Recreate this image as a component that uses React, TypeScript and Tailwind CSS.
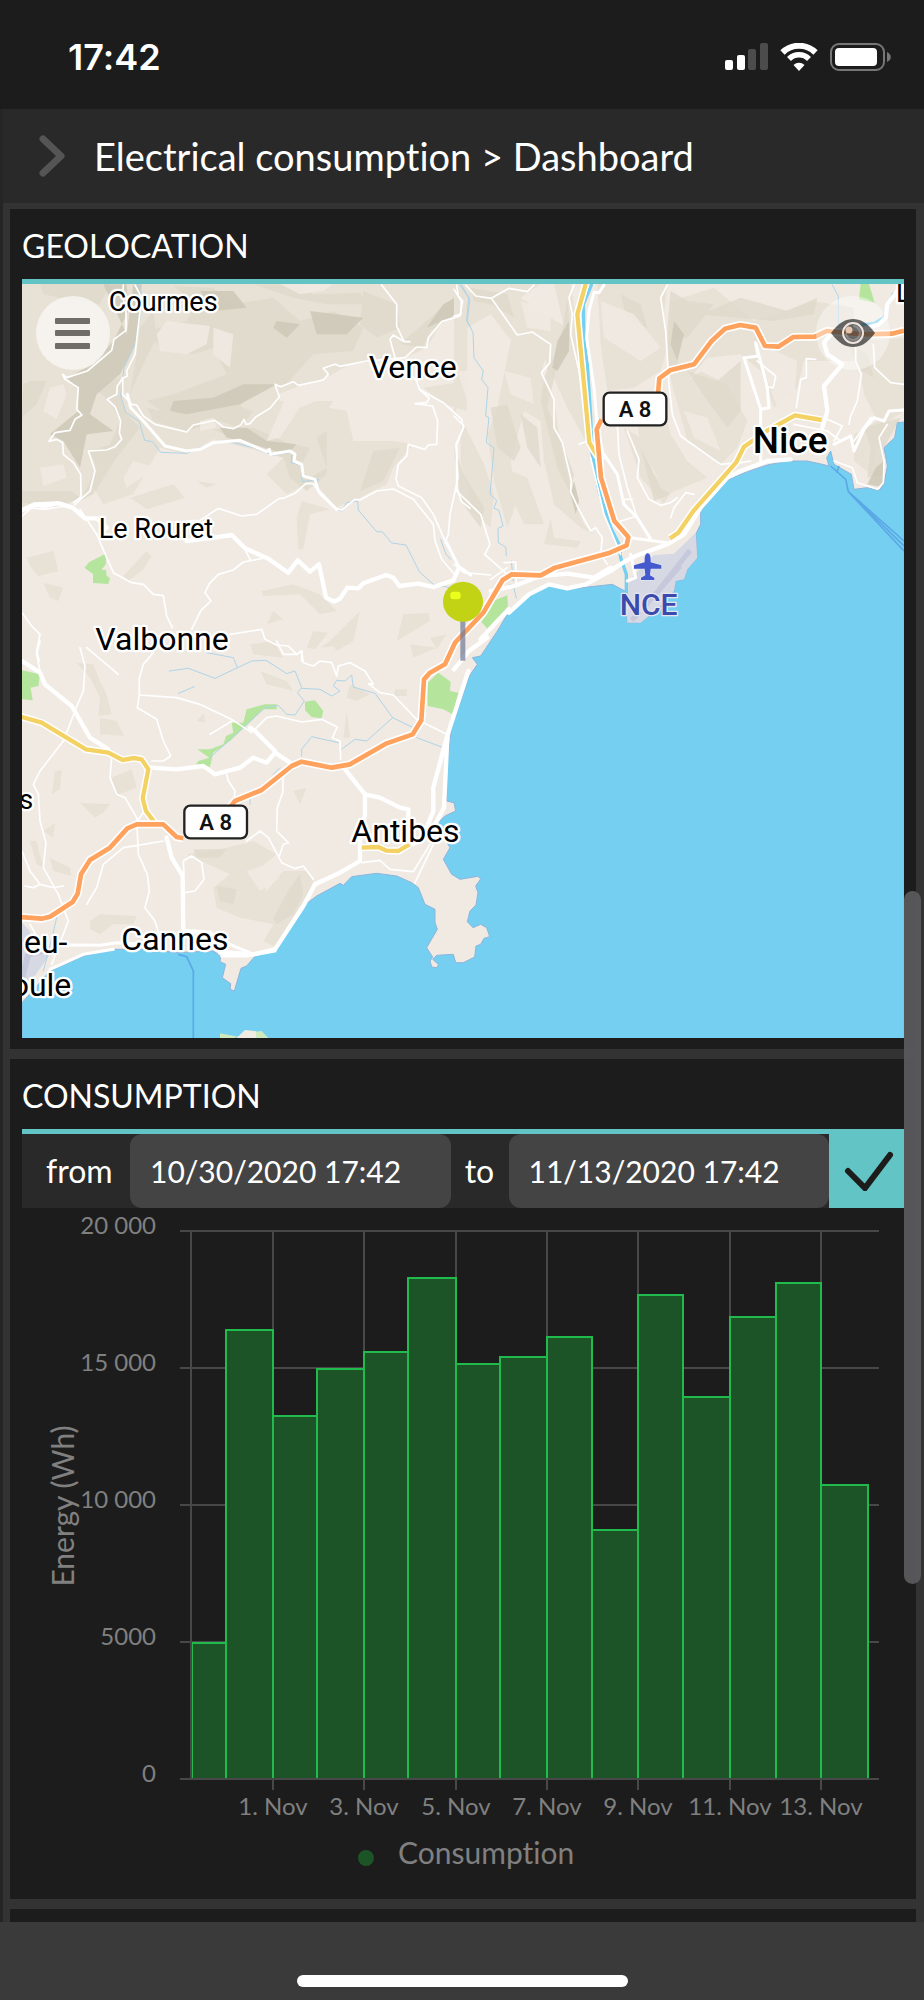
import { useState } from "react";
import type { ReactNode } from "react";

// ---------------------------------------------------------------------------
// Map data. The map is split in quadrants, paths are relative to their quadrant
// ---------------------------------------------------------------------------

interface Quadrant {
  x: number;
  y: number;
  pale?: string;
  light?: string;
  mid?: string;
  dark?: string;
  parks?: string;
  streams?: string;
  rivers?: string;
  minorRoads?: string;
  roads?: string;
  majorRoads?: string;
}

const SEA =
  "M2712 483 L2692 485 2684 530 2652 560 2662 615 2652 670 2637 688 2602 680 2562 685 2554 640 2502 610 2492 570 2480 590 2487 615 2467 610 2422 600 2362 600 2302 612 2242 632 2187 655 2142 700 2102 750 2102 790 2087 820 2092 890 2062 925 2052 955 2027 960 2022 990 1977 1040 1922 1085 1882 1085 1875 990 1837 970 1702 985 1647 975 1592 1000 1522 1060 1492 1110 1442 1185 1417 1190 1432 1210 1408 1245 1355 1400 1340 1520 1340 1620 1362 1625 1367 1650 1335 1665 1308 1690 1350 1760 1330 1795 1355 1840 1380 1855 1434 1846 1442 1854 1427 1875 1434 1895 1428 1932 1410 1950 1402 1982 1419 2000 1442 1990 1460 2000 1469 2027 1452 2032 1442 2050 1428 2055 1424 2088 1390 2105 1367 2105 1360 2080 1310 2083 1298 2095 1315 2110 1312 2120 1295 2118 1290 2100 1298 2088 1280 2060 1312 2005 1305 1985 1305 1945 1275 1930 1255 1880 1235 1865 1190 1845 1130 1837 1055 1847 1030 1873 1020 1867 950 1905 910 1935 825 2070 770 2080 740 2115 723 2122 703 2190 690 2185 692 2168 667 2150 677 2110 660 2102 662 2085 640 2070 525 2075 460 2065 340 2065 250 2085 150 2130 66 2225 66 2340 2712 2340Z";

const QUADRANTS: Quadrant[] = [
  {
    x: 0,
    y: 0,
    light:
      "M66 69 L1400 69 1385 160 1325 185 1280 260 1215 290 1050 310 980 350 900 375 835 400 840 420 1000 420 960 480 1010 560 985 610 1080 690 1010 740 940 660 860 700 800 640 850 590 640 535 560 580 480 560 400 700 310 730 280 680 220 720 66 745Z M930 430 L1040 450 1060 540 1180 540 1240 550 1180 620 1160 670 1060 720 1000 740 950 640 970 520Z M905 720 L990 745 930 760 910 865 895 865 890 770Z M80 890 L160 870 175 930 115 945 90 915Z M370 945 L440 870 455 885 430 925 385 960Z M390 710 L520 670 555 710 440 745Z M785 990 L880 970 960 1000 1010 1050 960 1060 900 1000 790 1005Z M1080 1050 L1060 1140 1010 1170 990 1140Z M1210 1060 L1285 1055 1290 1080 1190 1140Z M940 1110 L985 1115 945 1165 920 1160Z M130 965 L190 980 175 1020 150 1010Z M590 660 L650 670 620 680Z M1270 380 L1400 360 1400 450 1330 430Z M820 1050 L800 1090 850 1075Z M1290 1130 L1340 1120 1310 1165Z",
    mid:
      "M120 69 L330 69 300 130 180 110 130 100Z M520 75 L640 80 700 130 820 110 900 180 1000 150 1090 200 1060 270 940 280 860 370 780 380 700 450 560 500 440 420 520 400 680 340 640 260 580 280 490 270 440 210 560 180 590 130Z M760 70 L900 70 940 100 1080 95 1100 130 980 130 880 110Z M1090 90 L1190 130 1200 200 1130 230 1080 190Z M1200 250 L1290 170 1370 100 1385 150 1290 210 1270 260Z M440 440 L540 460 700 430 760 450 720 500 660 480 560 510 460 480Z M640 505 L760 500 860 545 930 560 900 620 930 650 980 620 950 530 980 510 980 640 920 690 870 650 850 590 760 560Z M280 380 L360 350 365 420 380 460 420 500 350 590 280 700 240 720 290 620 270 570 330 550 360 480 330 420Z M66 690 L215 690 240 710 180 740 66 725Z M1120 570 L1200 560 1150 660 1080 690Z M420 200 L460 150 470 230 430 310 390 400 410 280Z M90 360 L70 370 66 470 110 430 140 360Z",
    dark:
      "M310 70 L380 70 385 150 340 240 280 310 200 350 235 380 235 450 150 520 190 540 240 620 260 520 340 510 270 460 290 400 360 340 410 240 420 150 425 70 400 70 380 220Z M520 420 L640 410 730 370 830 370 720 430 560 460 510 450Z M600 90 L700 90 740 140 640 150Z M930 150 L1090 170 1040 220 950 220Z M660 500 L740 500 800 540 890 550 860 580 760 550 680 530Z M830 180 L900 190 860 230 820 200Z M1330 130 L1385 100 1370 160 1280 200Z",
    pale:
      "M150 380 L190 370 200 400 170 475 130 450Z M500 180 L630 195 620 250 560 280 480 270 470 220Z M860 390 L960 370 1000 400 900 440 840 530 800 540 840 450Z M840 69 L1000 69 970 90 900 100Z M400 600 L470 620 380 680 370 650Z M1100 430 L1180 420 1160 500 1090 500Z M600 480 L640 470 650 500 600 510Z M640 200 L700 220 690 320 640 280Z M120 620 L190 610 200 650 130 675Z",
    parks: "M317 878 L268 903 253 920 279 939 279 966 325 969 330 952 320 944 318 927 305 926 318 908Z",
    streams:
      "M415 72 L424 100 420 170 410 240 372 320 362 405 378 455 418 482 434 538 458 542 482 574 560 577 630 548 680 540 760 560 820 583 878 572 873 605 903 612 907 662 955 655 948 685 1010 745 1025 750 1040 725 1073 720 1075 747 1130 812 1148 813 1175 846 1218 852 1258 932 1300 970 1350 980 M1380 72 L1406 110 1400 180 1412 200 M1322 835 L1338 880 1352 895",
    minorRoads:
      "M370 72 L368 110 378 140 378 208 342 235 335 268 262 330 200 350 188 340 195 355 235 380 230 445 246 462 225 475 210 508 165 515 147 541 170 535 188 545 190 580 220 605 242 640 243 708 220 725 M405 72 L425 110 405 280 380 330 382 345 368 352 352 375 350 400 322 415 345 437 362 480 358 515 365 535 345 557 320 567 265 570 285 630 270 690 225 730 M368 350 L368 400 395 430 410 432 430 465 465 490 560 513 580 492 645 478 670 498 700 503 722 492 732 475 738 490 750 488 768 467 810 442 838 408 825 370 842 377 880 362 895 373 970 357 985 340 970 322 1005 310 1020 316 1100 300 1215 290 1250 258 1280 260 1285 230 1325 182 1380 165 1388 120 1375 105 1370 72 M1145 72 L1190 130 1190 195 1212 242 1230 242 M1212 242 L1180 222 1170 235 1185 290 1250 360 1258 385 1330 425 1385 475 1390 500 1368 550 1374 650 1350 760 1345 820 1335 845 M1258 385 L1288 412 1280 425 1245 428 1298 435 1313 480 1310 550 1285 552 1275 565 1225 550 1220 585 1195 610 1188 655 1195 675 1265 710 1300 760 1340 850 1380 920 M560 780 L600 778 655 742 725 765 770 760 838 712 850 712 885 697 918 667 940 668 960 700 1005 742 1025 747 1065 715 1080 717 1130 690 1180 684 1240 715 1300 790 1305 840 1325 895 1365 942 M750 895 L735 865 M1370 680 L1385 722 1410 742 M240 745 L290 820 320 890 340 935 395 965 430 970 460 1000 490 1004 500 1065 517 1100 M66 765 L95 740 130 745 200 735 M800 890 L730 903 700 927 655 940 628 968 615 995 633 1020 603 1048 575 1105 M66 1055 L95 1095 120 1120 110 1170 118 1200 M690 1120 L785 1105 795 1135 830 1152 865 1155 890 1180 905 1170 905 1200",
    roads:
      "M382 400 L392 440 430 480 495 555 560 570 600 565 640 545 720 538 800 572 808 565 812 580 870 570 885 580 882 600 905 610 910 645 945 655 955 690 1010 745 M66 745 L105 728 175 725 215 738 260 775 M1340 845 L1375 915 1412 942",
    majorRoads:
      "M66 748 L105 730 130 735 175 727 218 740 255 772 290 772 320 800 M560 840 L640 830 695 822 735 862 805 893 865 935 893 898 930 932 957 910 978 1010 1003 1022 1020 1013 1042 980 1075 982 1090 967 1158 942 1180 950 1198 975 1255 968 1300 978 1360 958 1375 925",
  },
  {
    x: 1362,
    y: 0,
    light:
      "M0 69 L260 69 200 110 290 170 340 200 330 280 280 330 270 270 180 250 110 160 40 200 40 330 20 420 0 460Z M170 240 L240 215 285 255 260 340 300 410 320 560 350 690 390 790 420 820 380 800 300 730 270 600 260 480 210 450 170 600 190 720 160 800 120 660 100 520 130 440Z M300 69 L350 69 370 200 400 400 400 550 340 440 290 330 340 240Z M430 69 L640 69 630 160 640 260 620 330 540 380 460 390 440 250Z M650 120 L780 80 900 180 1080 120 1200 140 1200 300 1050 300 1030 380 960 440 920 330 860 280 760 290 700 360 660 400 640 300Z M660 390 L740 330 820 370 880 480 850 560 800 610 700 540Z M510 500 L560 530 600 640 650 690 630 730 560 650Z M1200 240 L1350 230 1350 450 1290 490 1250 640 1200 600 1200 520 1270 480 1230 400Z M290 770 L270 850 370 860 380 840 300 830Z M20 470 L90 610 120 700 110 800 60 760 20 600Z M150 620 L220 650 270 790 210 790 150 660Z M540 400 L620 400 650 520 700 600 760 650 640 700 560 560Z",
    mid:
      "M340 110 L350 240 310 310 280 440 330 560 360 640 350 700 310 620 260 420 270 350 320 240Z M650 90 L700 120 780 130 700 230 650 240 680 330 640 340 640 200Z M500 100 L560 130 580 200 520 180Z M740 160 L860 110 1000 150 1090 110 1080 160 960 180 840 170Z M50 80 L160 100 180 170 110 130 60 120Z M700 330 L790 360 860 300 860 450 820 500 760 420Z M110 440 L160 430 200 560 180 600 130 560Z M1230 500 L1340 470 1290 560 1290 640 1240 650 1250 560Z M200 460 L250 500 260 620 220 560Z M560 560 L620 680 650 700 600 720Z M0 560 L30 640 90 740 80 800 20 720Z M1180 240 L1240 280 1260 350 1210 320Z",
    dark:
      "M310 240 L345 180 345 270 310 330 295 320Z M660 180 L690 220 670 300 650 250Z M1265 620 L1290 600 1290 680 1240 670Z M360 660 L375 720 365 760 350 700Z",
    pale:
      "M440 120 L540 160 620 260 560 300 450 230Z M900 240 L1030 300 1020 420 970 440 930 330Z M10 330 L70 330 90 450 40 420Z M690 450 L760 470 800 570 720 530Z M200 120 L290 150 290 210 220 200Z M150 330 L230 350 240 430 170 400Z M1080 330 L1200 320 1180 440 1110 440Z",
    parks: "M1220 69 L1245 69 1262 125 1215 115Z M160 1003 L162 1035 105 1108 82 1083 122 1018Z",
    streams:
      "M22 72 L48 115 40 180 57 215 60 290 88 330 83 355 102 380 95 465 105 470 97 545 120 560 108 700 128 718 120 742 135 748 147 795 132 802 133 845 155 858 157 885 M1135 72 L1153 105 1153 200 M165 970 L178 975 187 1012 M172 900 L178 960",
    rivers:
      "M412 72 L388 130 390 240 400 310 410 470 415 580 435 690 470 800 495 850 500 890 517 940 517 1000 M1300 140 L1290 170 1260 188 1220 192 M1318 100 L1306 125",
    minorRoads:
      "M35 72 L65 105 112 112 190 222 235 213 290 250 287 305 262 335 300 415 300 500 325 545 352 660 350 692 372 740 410 810 425 800 M112 112 L165 82 220 92 240 72 M0 85 L22 120 20 160 0 165 M360 72 L345 110 355 160 350 220 375 330 400 540 375 550 M0 465 L30 495 8 550 8 690 80 760 108 850 92 880 160 940 M640 72 L620 110 635 210 640 290 645 370 655 460 680 525 800 610 860 605 890 600 M520 510 L555 595 550 650 585 715 620 733 650 725 670 710 M650 770 L660 740 695 695 720 700 M490 490 L495 580 520 680 550 770 590 830 M1085 295 L1057 293 1057 350 1040 355 1027 440 M1205 260 L1205 300 1222 340 1210 420 1190 465 1185 490 M1258 250 L1262 320 1310 365 1350 370 M910 300 L965 345 958 380 935 378 M1110 470 L1165 495 1140 540 M1350 445 L1305 450 1290 480 1250 470 1200 540 M1300 490 L1275 530 1290 600 1288 665 1270 685 1210 665 1195 620 1140 600 M150 905 L185 903 187 970 M0 910 L30 935 110 942 M425 800 L445 830 440 880 460 910 M410 590 L450 760 500 880 M510 715 L535 715 M500 780 L550 765 M160 920 L110 955 M1020 490 L1120 510 1160 540",
    roads:
      "M450 72 L435 95 420 94 405 150 398 230 420 380 430 500 M875 290 L912 285 905 245 940 380 945 440 920 445 870 290 M920 440 L920 600 M450 580 L490 640 510 730 550 770 590 835 M530 830 L640 845 M530 880 L545 950 520 960 M430 500 L450 590 M1140 550 L1190 525 1200 570 1230 505 1260 470 1290 480 1305 450 1350 447",
    majorRoads:
      "M1350 75 L1330 90 1300 130 1295 170 1275 190 1225 205 1130 220 1110 245 1120 280 1165 310 1110 375 1120 450 1105 500 M470 930 L515 900 545 885 640 850 690 820 740 740 820 650 860 630 940 600 1010 595 M165 1055 L225 1000 285 970 340 982 395 970 460 935 515 900 M110 990 L180 975 260 945 340 938 420 950 470 920 M80 1135 L135 1075 165 1045 M0 1225 L45 1170 100 1130",
  },
  {
    x: 0,
    y: 1140,
    light:
      "M230 65 L280 70 300 120 320 160 335 220 295 225 300 170 270 110Z M165 390 L185 388 180 445 155 460Z M335 410 L395 385 410 440 345 465Z M240 485 L330 490 310 515 285 530Z M300 230 L350 240 372 285 300 280Z M270 840 L300 820 410 825 400 850 340 850 300 880 270 865Z M560 640 L680 620 760 600 830 640 780 680 800 750 850 690 920 690 940 720 880 870 830 920 790 900 820 850 720 830 650 800 640 740 690 700Z M750 10 L820 0 850 50 760 40Z M1050 130 L1110 160 1070 180 1040 170Z M590 240 L612 215 615 245Z M880 450 L920 440 900 490Z M1185 145 L1220 145 1220 165 1180 165Z M1040 210 L1050 290 1030 290Z M1230 10 L1310 20 1240 50Z M780 90 L860 120 880 150 800 130Z M150 650 L210 680 215 705 160 690Z M130 570 L165 545 160 590Z M90 600 L110 600 130 680 110 670Z M960 20 L990 0 1060 10Z",
    mid: "M870 740 L900 700 910 760 880 820 830 850 820 830Z M650 735 L710 745 700 790 660 780Z M580 625 L680 625 660 650 590 650Z",
    pale: "M690 570 L750 570 740 610 700 600Z M850 390 L910 410 880 430Z M950 60 L1010 80 980 110Z M740 690 L800 670 840 710 780 750Z",
    parks:
      "M66 88 L120 100 115 135 92 140 98 178 66 175Z M915 182 L945 178 970 210 965 232 935 228 915 208Z M1315 95 L1352 122 1350 150 1375 155 1358 220 1330 205 1283 195 1283 125Z M795 190 L830 190 830 205 790 205 690 300 640 335 630 378 588 370 595 360 628 350 592 325 630 325 670 310 678 285 700 275 695 245 730 245 740 205Z",
    streams:
      "M508 90 L565 82 645 112 755 60 798 58 860 98 885 90 905 140 892 155 913 180 885 222 860 220 835 193 795 200 730 260 630 350 M905 142 L960 145 995 165 1020 150 1000 135 1010 118 1035 120 1055 102 1060 138 1125 157 1178 230 1250 265 M1178 230 L1100 300 1065 295 1025 325 M1250 290 L1330 320 M905 345 L905 325 935 287 1015 305 M535 157 L583 137 M620 35 L700 50 712 80 M170 830 L155 895 130 990 M820 400 L840 380 M750 490 L750 470",
    minorRoads:
      "M120 0 L110 40 120 90 M240 20 L255 75 250 150 235 185 190 300 120 390 100 430 115 460 120 540 138 605 130 680 175 760 205 840 155 970 M260 20 L355 100 M460 35 L430 70 418 110 418 160 412 200 470 235 490 300 512 345 490 360 455 360 M420 162 L530 170 600 190 700 238 755 275 M630 280 L700 238 M765 265 L800 230 830 225 905 243 965 235 1012 258 997 290 1020 300 1022 355 M680 400 L685 420 705 450 700 490 M850 410 L848 455 832 500 830 570 865 605 850 610 838 645 M740 600 L780 570 805 590 845 665 885 683 910 675 940 715 M335 350 L330 410 350 460 375 470 410 530 415 640 442 700 448 750 435 800 465 840 480 890 M490 600 L430 610 370 620 310 670 290 740 260 790 M552 700 L550 660 575 645 605 665 612 715 585 750 555 755 M75 735 L100 740 120 730 160 740 190 735 M66 630 L90 690 120 730 M830 0 L850 40 890 40 905 30 910 65 940 75 960 60 995 65 1010 105 1015 75 1050 65 1095 90 1120 130 1105 128 1140 155 1180 162 1250 235 M90 850 L110 885 M1085 665 L1140 658 1170 685 1240 692 1290 610 M1245 725 L1300 610 M440 500 L412 540 M1250 235 L1340 280",
    roads:
      "M200 912 L300 913 350 905 430 910 M580 870 L640 880 700 915 750 935 M150 985 L250 940 340 925 M665 945 L740 945 825 930",
    majorRoads:
      "M66 60 L120 95 135 130 215 195 270 290 325 325 M450 380 L530 385 610 375 645 400 720 380 760 350 800 365 825 335 870 365 M825 330 L765 270 750 260 M1035 385 L1095 460 1140 470 1200 500 1225 505 1225 560 M1095 460 L1095 520 1080 600 1080 660 1020 695 945 730 910 795 825 925 760 940 690 935 660 935 M500 590 L515 650 548 705 550 870 630 875 M1405 90 L1340 290 1300 440 1300 510 1280 560 M1342 290 L1332 500 1290 580 1240 610",
  },
];

const HIGHWAYS =
  "M2712 209 L2675 218 2590 220 2480 210 2445 227 2380 228 2335 257 2295 255 2267 200 2220 192 2175 203 2135 240 2082 310 2010 328 1978 352 1973 410 M1805 475 L1790 505 1803 650 1843 780 1885 828 1880 853 1830 875 1665 920 1622 943 1535 940 1508 957 1450 1055 1365 1145 1335 1210 1290 1235 1272 1255 1264 1378 1238 1420 1160 1447 1050 1510 995 1520 905 1502 875 1515 785 1587 705 1620 685 1645 M550 1732 L530 1728 490 1690 410 1690 382 1702 330 1760 270 1797 243 1840 233 1898 218 1923 150 1967 125 1973 60 1968";

const YELLOW_ROADS =
  "M1757 69 L1732 160 1752 370 1768 545 1792 585 1808 592 M2010 832 L2035 815 2080 750 2208 605 2232 557 2300 510 2385 463 2465 477 M60 1366 L125 1385 258 1465 325 1475 368 1497 402 1491 425 1495 445 1525 428 1612 438 1650 468 1690 M1085 1760 L1135 1758 1160 1769 1195 1770 1228 1750";

const PLACES = [
  { name: "Courmes", x: 326, y: 149, size: 81, weight: 400 },
  { name: "Vence", x: 1106, y: 352, size: 96, weight: 400 },
  { name: "Le Rouret", x: 296, y: 830, size: 81, weight: 400 },
  { name: "Valbonne", x: 286, y: 1166, size: 96, weight: 400 },
  { name: "Nice", x: 2258, y: 576, size: 111, weight: 500 },
  { name: "Antibes", x: 1054, y: 1744, size: 96, weight: 400 },
  { name: "Cannes", x: 364, y: 2066, size: 96, weight: 400 },
  { name: "s", x: 58, y: 1645, size: 81, weight: 400 },
  { name: "eu-", x: 72, y: 2076, size: 96, weight: 400 },
  { name: "oule", x: 32, y: 2206, size: 96, weight: 400 },
  { name: "L", x: 2688, y: 124, size: 81, weight: 400 },
];

function RoadShield({ x, y }: { x: number; y: number }) {
  return (
    <g>
      <rect x={x} y={y} width="188" height="98" rx="18" fill="#fff" stroke="#222" strokeWidth="7" />
      <text x={x + 94} y={y + 72} textAnchor="middle" fontSize="66" fontWeight="600" fill="#111">
        A 8
      </text>
    </g>
  );
}

function RegionMap() {
  return (
    <svg viewBox="66 69 2646 2262" className="block h-auto w-full font-[Roboto,sans-serif]" role="img" aria-label="Map">
      <rect x="66" y="69" width="2646" height="2262" fill="#f0eae3" />
      {QUADRANTS.map((q) => (
        <g key={`${q.x}-${q.y}`} transform={`translate(${q.x} ${q.y})`}>
          <path d={q.light} fill="#e8e2d6" />
          <path d={q.mid} fill="#dfdacb" fillOpacity="0.8" />
          <path d={q.dark} fill="#cdc8b6" fillOpacity="0.85" />
          <path d={q.pale} fill="#f0eae3" fillOpacity="0.85" />
        </g>
      ))}
      <path d={SEA} fill="#75cff1" stroke="#8fb4dc" strokeWidth="3" />
      {/* Ferry lines */}
      <g fill="none" stroke="#5ba8e6" strokeWidth="5">
        <path d="M2492 615 L2537 655 2545 692 2712 840 M2545 692 L2712 855 M2545 692 L2712 870 M2517 615 L2510 635" />
        <path d="M535 2080 L560 2087 580 2130 580 2331" />
      </g>
      {/* Island */}
      <path d="M660 2331 L660 2317 715 2327 700 2331Z M765 2312 L785 2310 805 2331 765 2331Z" fill="#d0e8bd" />
      <path d="M710 2331 L735 2307 768 2311 768 2331Z" fill="#f0eae3" />
      {/* Airports */}
      <path
        d="M2087 815 L2092 890 2062 925 2052 955 2027 960 2022 990 1977 1040 1922 1085 1882 1085 1885 960 1962 882 2022 878Z"
        fill="#d6d8e4"
      />
      <path d="M1962 1005 L2070 868 M1935 1035 L2040 915 M1895 1078 L1920 1052" stroke="#c6c8dc" strokeWidth="15" />
      <path d="M66 1985 L90 2010 95 2080 150 2080 100 2150 66 2175Z" fill="#d6d8e4" />
      <path d="M66 2150 L85 2080 130 2070" fill="none" stroke="#c6c8dc" strokeWidth="18" />
      {QUADRANTS.map((q) => (
        <g
          key={`${q.x}-${q.y}`}
          transform={`translate(${q.x} ${q.y})`}
          fill="none"
          strokeLinejoin="round"
          strokeLinecap="round"
        >
          <path d={q.parks} fill="#b5e59d" />
          <path d={q.streams} stroke="#afd4e8" strokeWidth="3" />
          <path d={q.rivers} stroke="#75cff1" strokeWidth="10" />
          <path d={q.minorRoads} stroke="#fff" strokeWidth="5" />
          <path d={q.roads} stroke="#fff" strokeWidth="9" />
          <path d={q.majorRoads} stroke="#fff" strokeWidth="13" />
        </g>
      ))}
      <g fill="none" strokeLinejoin="round">
        <path d={YELLOW_ROADS} stroke="#fff" strokeWidth="22" />
        <path d={YELLOW_ROADS} stroke="#f4d163" strokeWidth="13" />
        <path d={HIGHWAYS} stroke="#fff" strokeWidth="24" />
        <path d={HIGHWAYS} stroke="#ffa25e" strokeWidth="14" />
      </g>
      <RoadShield x={1811} y={395} />
      <RoadShield x={553} y={1634} />
      <g paintOrder="stroke" stroke="#fff" strokeWidth="14" strokeLinejoin="round">
        {PLACES.map((place) => (
          <text key={place.name} x={place.x} y={place.y} fontSize={place.size} fontWeight={place.weight} fill="#000">
            {place.name}
          </text>
        ))}
        <text x="1946" y="1062" textAnchor="middle" fontSize="90" fontWeight="500" fill="#3c4bab" stroke="#e4e6f2" strokeWidth="8">
          NCE
        </text>
      </g>
      <path
        d="M1943 877 C1950 877 1952 888 1952 898 L1952 904 1984 913 1984 923 1952 923 1950 943 1963 950 1963 957 1923 957 1923 950 1936 943 1934 923 1902 923 1902 913 1934 904 1934 898 C1934 888 1936 877 1943 877Z"
        fill="#4559cf"
        stroke="#e4e6f2"
        strokeWidth="4"
        strokeLinejoin="round"
        paintOrder="stroke"
      />
      {/* Location pin */}
      <rect x="1381" y="1075" width="15" height="124" fill="#6d7896" fillOpacity="0.7" />
      <circle cx="1389" cy="1022" r="60" fill="#c2d315" />
      <rect x="1351" y="992" width="31" height="23" rx="9" fill="#eaff1c" />
    </svg>
  );
}

// ---------------------------------------------------------------------------
// Chart
// ---------------------------------------------------------------------------

const READINGS = [
  4960, 16400, 13250, 14960, 15580, 18300, 15150, 15400, 16130, 9090, 17660, 13940, 16860, 18100, 10730,
];
const EDGES = [170, 204, 251, 295, 342, 386, 434, 478, 525, 570, 616, 661, 708, 754, 799, 846];
const DAY_TICKS = [
  { x: 251, label: "1. Nov" },
  { x: 342, label: "3. Nov" },
  { x: 434, label: "5. Nov" },
  { x: 525, label: "7. Nov" },
  { x: 616, label: "9. Nov" },
  { x: 708, label: "11. Nov" },
  { x: 799, label: "13. Nov" },
];
const ENERGY_TICKS = [
  { value: 20000, label: "20 000" },
  { value: 15000, label: "15 000" },
  { value: 10000, label: "10 000" },
  { value: 5000, label: "5000" },
  { value: 0, label: "0" },
];
const PLOT_TOP = 23;
const PLOT_BOTTOM = 571;

const toY = (value: number) => Math.round(PLOT_BOTTOM - (value / 20000) * (PLOT_BOTTOM - PLOT_TOP));

function ConsumptionChart() {
  return (
    <svg viewBox="0 0 882 691" className="block h-auto w-full" role="img" aria-label="Consumption chart">
      <g stroke="#484848" strokeWidth="2">
        {ENERGY_TICKS.map((tick) => (
          <line key={tick.value} x1="158" x2="857" y1={toY(tick.value)} y2={toY(tick.value)} />
        ))}
        {DAY_TICKS.map((tick) => (
          <line key={tick.x} x1={tick.x} x2={tick.x} y1={PLOT_TOP} y2={PLOT_BOTTOM + 11} />
        ))}
      </g>
      <g fill="#1c5427" stroke="#20bb4c" strokeWidth="2">
        {READINGS.map((value, i) => (
          <rect
            key={EDGES[i]}
            x={EDGES[i]}
            y={toY(value)}
            width={EDGES[i + 1] - EDGES[i]}
            height={PLOT_BOTTOM - toY(value)}
          />
        ))}
      </g>
      <path d={`M169 ${PLOT_TOP} V${PLOT_BOTTOM} M158 ${PLOT_BOTTOM} H857`} stroke="#484848" strokeWidth="2" />
      <g fill="#808080" fontSize="24">
        {ENERGY_TICKS.map((tick) => (
          <text key={tick.value} x="134" y={toY(tick.value) + 3} textAnchor="end">
            {tick.label}
          </text>
        ))}
        {DAY_TICKS.map((tick) => (
          <text key={tick.x} x={tick.x} y="607" textAnchor="middle">
            {tick.label}
          </text>
        ))}
      </g>
      <text transform="translate(52 298) rotate(-90)" textAnchor="middle" fontSize="30" fill="#808080">
        Energy (Wh)
      </text>
      <circle cx="344" cy="650" r="8" fill="#1c5427" />
      <text x="376" y="656" fontSize="30" fill="#808080">
        Consumption
      </text>
    </svg>
  );
}

// ---------------------------------------------------------------------------
// Layout
// ---------------------------------------------------------------------------

function StatusBar() {
  return (
    <div className="flex h-[109px] items-center justify-between bg-[#1c1c1c] pt-1 pr-8 pl-[68px] text-white">
      <span className="font-[Inter,sans-serif] text-4xl leading-10 font-semibold">17:42</span>
      <div className="flex items-center gap-3">
        <svg width="43" height="28" viewBox="0 0 43 28" fill="#fff" aria-hidden="true">
          <rect x="0" y="17" width="8" height="10" rx="2" />
          <rect x="12" y="12" width="8" height="15" rx="2" />
          <rect x="23" y="6" width="8" height="21" rx="2" fill="#4c4c4c" />
          <rect x="35" y="0" width="8" height="27" rx="2" fill="#4c4c4c" />
        </svg>
        <svg width="38" height="28" viewBox="0 0 38 28" aria-hidden="true">
          <path d="M2.500 9.500 A23.500 23.500 0 0 1 35.500 9.500" fill="none" stroke="#fff" strokeWidth="6" />
          <path d="M9 16 A14 14 0 0 1 29 16" fill="none" stroke="#fff" strokeWidth="5.500" />
          <path d="M19 28 L13.500 22 A8 8 0 0 1 24.500 22Z" fill="#fff" />
        </svg>
        <svg width="62" height="28" viewBox="0 0 62 28" aria-hidden="true">
          <rect x="1" y="1" width="53" height="26" rx="8" fill="none" stroke="#777" strokeWidth="2" />
          <rect x="5" y="5" width="42" height="18" rx="4" fill="#fff" />
          <path d="M57 9 C62 11 62 17 57 19Z" fill="#777" />
        </svg>
      </div>
    </div>
  );
}

function Card({ title, children }: { title: string; children: ReactNode }) {
  return (
    <section className="bg-[#1c1c1c] px-3">
      <h2 className="border-b-5 border-[#62c4c4] pt-[17px] pb-[13px] text-[32px] leading-10 text-white">{title}</h2>
      {children}
    </section>
  );
}

export default function App() {
  const [from, setFrom] = useState("10/30/2020 17:42");
  const [to, setTo] = useState("11/13/2020 17:42");

  return (
    <div className="flex min-h-screen flex-col bg-[#3a3a3a] font-[Lato,sans-serif] [font-variant-ligatures:none]">
      <StatusBar />

      <main className="relative border-l-3 border-[#252525] bg-[#333]">
        <header className="flex h-[94px] items-center gap-[27px] bg-[#292929] pl-9">
          <button type="button" aria-label="Open menu">
            <svg width="28" height="42" viewBox="0 0 28 42" fill="none" aria-hidden="true">
              <path d="M4 4 L22 21 4 38" stroke="#555" strokeWidth="7" strokeLinecap="round" strokeLinejoin="round" />
            </svg>
          </button>
          <h1 className="text-[38px] leading-10 text-white">Electrical consumption &gt; Dashboard</h1>
        </header>

        <div className="flex flex-col gap-2.5 pt-1.5 pr-2 pl-[7px]">
          <Card title="GEOLOCATION">
            <div className="relative mb-[11px]">
              <RegionMap />
              <button
                type="button"
                aria-label="Map menu"
                className="absolute top-3 left-3.5 flex size-[74px] items-center justify-center rounded-full bg-white/60"
              >
                <svg width="36" height="32" viewBox="0 0 36 32" fill="#706d68" aria-hidden="true">
                  <rect width="35" height="6" rx="1" y="1" />
                  <rect width="35" height="6" rx="1" y="13" />
                  <rect width="35" height="6" rx="1" y="26" />
                </svg>
              </button>
              <button
                type="button"
                aria-label="Show layers"
                className="absolute top-3 right-3.5 flex size-[74px] items-center justify-center rounded-full bg-white/40"
              >
                <svg width="44" height="30" viewBox="0 0 44 30" aria-hidden="true">
                  <path d="M0 15 C8 4 15 1 22 1 C29 1 36 4 44 15 C36 26 29 29 22 29 C15 29 8 26 0 15Z" fill="#000" fillOpacity="0.58" />
                  <circle cx="22" cy="15" r="10" fill="none" stroke="#eee6e0" strokeWidth="2" />
                  <path d="M22 8 A7 7 0 1 1 15 15" fill="none" stroke="#fff" strokeOpacity="0.25" strokeWidth="2" />
                  <circle cx="18" cy="12" r="3.500" fill="#e5c3ac" />
                </svg>
              </button>
            </div>
          </Card>

          <Card title="CONSUMPTION">
            <form className="flex h-[74px] bg-[#292929] text-[32px] text-white" onSubmit={(e) => e.preventDefault()}>
              <label htmlFor="from" className="flex w-[108px] shrink-0 items-center pl-6">
                from
              </label>
              <input
                id="from"
                type="text"
                value={from}
                onChange={(e) => setFrom(e.target.value)}
                className="min-w-0 flex-1 rounded-xl bg-[#444] px-5 text-[30px] outline-none"
              />
              <label htmlFor="to" className="flex w-[58px] shrink-0 items-center justify-center">
                to
              </label>
              <input
                id="to"
                type="text"
                value={to}
                onChange={(e) => setTo(e.target.value)}
                className="min-w-0 flex-1 rounded-xl bg-[#444] px-5 text-[30px] outline-none"
              />
              <button
                type="submit"
                aria-label="Apply"
                className="flex w-[75px] shrink-0 items-center justify-center bg-[#62c4c4] pl-1"
              >
                <svg width="50" height="40" viewBox="0 0 50 40" fill="none" aria-hidden="true">
                  <path d="M4 20 L21 37 46 4" stroke="#1c1c1c" strokeWidth="6" strokeLinecap="round" />
                </svg>
              </button>
            </form>
            <ConsumptionChart />
          </Card>

          <div className="h-[13px] bg-[#1c1c1c]" />
        </div>

        {/* Scroll indicator */}
        <div className="absolute top-[782px] right-[3px] h-[693px] w-[17px] rounded-full bg-[#5a5a5c]/95" />
      </main>

      <footer className="flex flex-1 items-end justify-center pb-[13px]">
        <div className="h-3 w-[331px] rounded-full bg-white" />
      </footer>
    </div>
  );
}
